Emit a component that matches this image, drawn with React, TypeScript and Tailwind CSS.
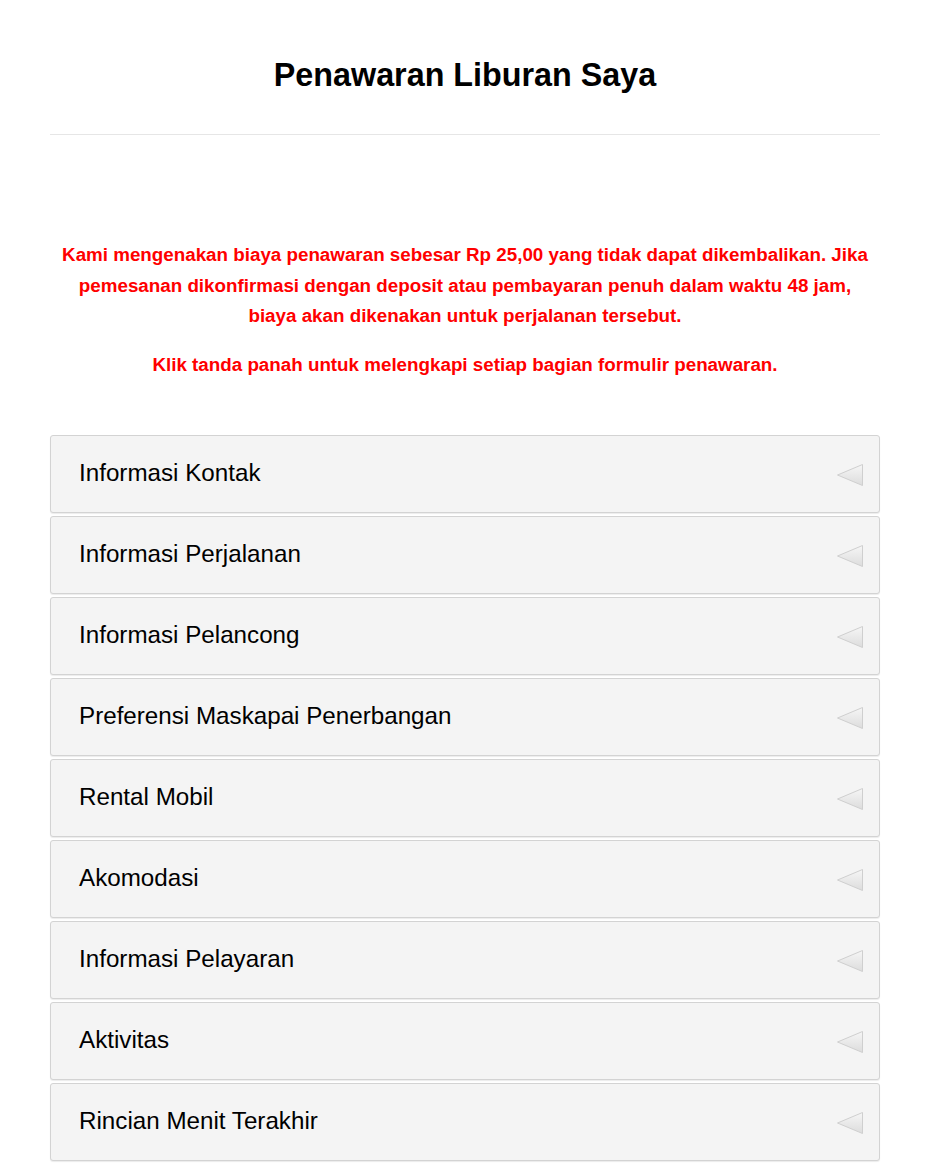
import React from "react";

const items = [
  "Informasi Kontak",
  "Informasi Perjalanan",
  "Informasi Pelancong",
  "Preferensi Maskapai Penerbangan",
  "Rental Mobil",
  "Akomodasi",
  "Informasi Pelayaran",
  "Aktivitas",
  "Rincian Menit Terakhir",
];

function Arrow() {
  return (
    <svg width="28" height="24" viewBox="0 0 28 24">
      <defs>
        <linearGradient id="ag" x1="0" y1="0" x2="0" y2="1">
          <stop offset="0" stopColor="#f6f6f6" />
          <stop offset="1" stopColor="#dcdcdc" />
        </linearGradient>
      </defs>
      <polygon points="26.5,1.5 26.5,22.5 1.5,12" fill="url(#ag)" stroke="#cfcfcf" strokeWidth="1" strokeLinejoin="round" />
    </svg>
  );
}

export default function App() {
  return (
    <div className="bg-white min-h-[1165px] font-['Liberation_Sans',Arial,sans-serif] text-black">
      <div className="mx-[50px] pt-[56px]">
        <h1 className="text-center text-[32.3px] font-bold leading-[38px]">Penawaran Liburan Saya</h1>
        <div className="mt-[40px] h-px bg-[#e6e6e6]" />
        <div className="mt-[105px] text-center text-[18.8px] font-bold leading-[30.5px] text-[#ff0000]">
          <p>
            Kami mengenakan biaya penawaran sebesar Rp 25,00 yang tidak dapat dikembalikan. Jika
            <br />
            pemesanan dikonfirmasi dengan deposit atau pembayaran penuh dalam waktu 48 jam,
            <br />
            biaya akan dikenakan untuk perjalanan tersebut.
          </p>
          <p className="mt-[18px]">Klik tanda panah untuk melengkapi setiap bagian formulir penawaran.</p>
        </div>
        <div className="mt-[55px] flex flex-col gap-[3px]">
          {items.map((t) => (
            <div
              key={t}
              className="flex h-[78px] items-center justify-between rounded-[3px] border border-[#d3d3d3] bg-[#f4f4f4] pl-[28px] pr-[15px] shadow-[0_1px_1px_rgba(0,0,0,0.08)]"
            >
              <span className="text-[24.2px] leading-[28px] -mt-[3px]">{t}</span>
              <span className="mt-[2px]">
                <Arrow />
              </span>
            </div>
          ))}
        </div>
      </div>
    </div>
  );
}
